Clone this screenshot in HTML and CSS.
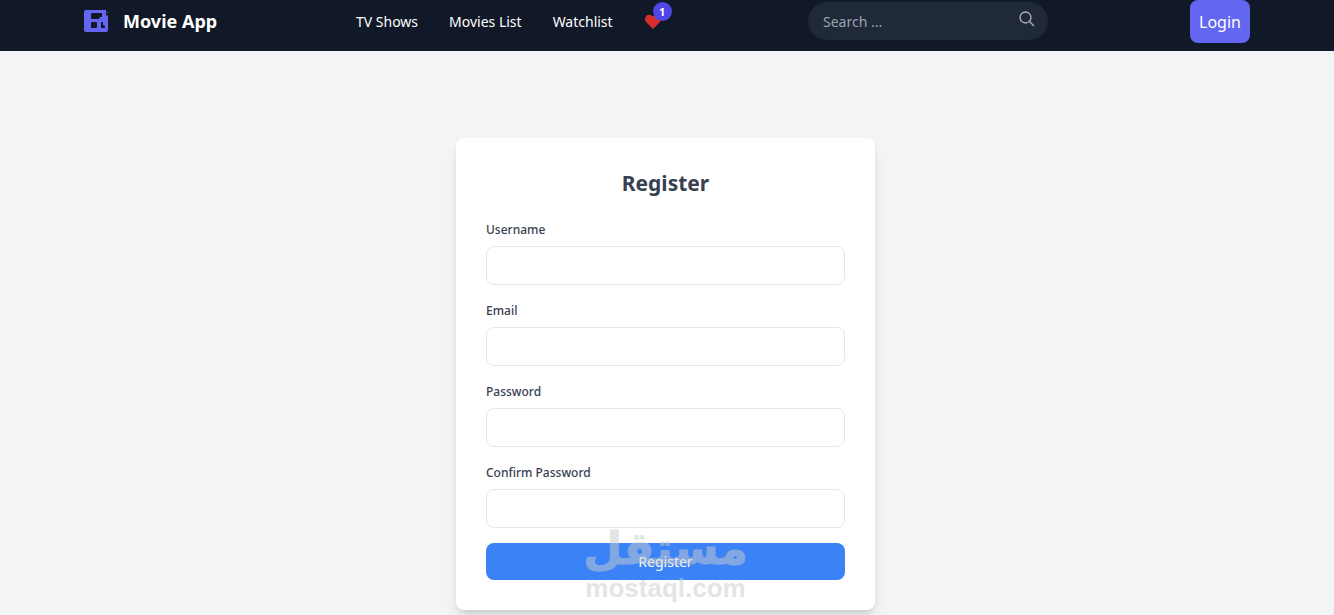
FILE: index.html
```html
<!DOCTYPE html>
<html lang="en">
<head>
<meta charset="utf-8">
<title>Movie App</title>
<link rel="stylesheet" href="styles.css">
</head>
<body>
<header class="navbar">
  <div class="navbar-inner">
    <a class="brand" href="#">
      <svg class="brand-icon" viewBox="0 0 24 22" aria-hidden="true">
        <path fill="#6366f1" fill-rule="evenodd" d="M2 0H22V3L24 2V20Q24 22 22 22H2Q0 22 0 20V2Q0 0 2 0ZM8 3Q7 3 7 4V8Q7 9 8 9H15L16 7H18V3ZM8 12Q7 12 7 13V17Q7 18 8 18H12Q13 18 13 17V13Q13 12 12 12ZM17 12V17Q17 18 18 18H21V16L19 15V12ZM22 3V6L24 5V3Z"/>
      </svg>
      <span>Movie App</span>
    </a>
    <nav class="links">
      <a href="#">TV Shows</a>
      <a href="#">Movies List</a>
      <a href="#">Watchlist</a>
      <a class="favorites" href="#" aria-label="Favorites">
        <svg class="heart" viewBox="0 0 16 15" aria-hidden="true"><path fill="#d32f2f" d="M8 15L1 8C-.6 6 0 3.600 1 2.200C3 0 6 .3 8 2.500C10 .3 13 0 15 2.200C16 3.600 16.600 6 15 8Z"/></svg>
        <span class="badge">1</span>
      </a>
    </nav>
    <form class="search">
      <input class="search-input" type="search" placeholder="Search ..." aria-label="Search">
      <button class="search-button" type="button" aria-label="Search">
        <svg viewBox="0 0 16 16" aria-hidden="true"><circle cx="6.500" cy="6.500" r="5.500"/><path d="M10.500 10.500L15 15"/></svg>
      </button>
    </form>
    <button class="login" type="button">Login</button>
  </div>
</header>
<main class="page">
  <form class="card">
    <h1 class="title">Register</h1>
    <div class="fields">
      <div class="field"><label for="username">Username</label><input id="username" type="text"></div>
      <div class="field"><label for="email">Email</label><input id="email" type="email"></div>
      <div class="field"><label for="password">Password</label><input id="password" type="password"></div>
      <div class="field"><label for="confirm">Confirm Password</label><input id="confirm" type="password"></div>
    </div>
    <button class="submit" type="button">Register</button>
    <div class="watermark">
      <span class="watermark-arabic" lang="ar" dir="rtl">مستقل</span>
      <span class="watermark-latin">mostaql.com</span>
    </div>
  </form>
</main>
</body>
</html>
```
FILE: styles.css
```css
* { box-sizing: border-box; }
body {
  margin: 0;
  min-height: 100vh;
  overflow: hidden;
  background: #f3f4f6;
  font-family: "Noto Sans", "Open Sans", sans-serif;
  font-size: 14px;
}
a { color: inherit; text-decoration: none; }
button, input { font: inherit; }
.navbar { background: #111827; color: #fff; }
.navbar-inner {
  display: grid;
  grid-template-columns: 272px 452px 240px 1fr;
  align-items: start;
  height: 51px;
  padding: 0 84px;
}
.brand {
  display: flex;
  align-items: center;
  gap: 15px;
  height: 42px;
  font-size: 18px;
  font-weight: 700;
}
.brand-icon { width: 24px; height: 22px; }
.links { display: flex; align-items: center; gap: 31px; height: 42px; }
.favorites { position: relative; display: flex; }
.heart { width: 18px; height: 15px; }
.badge {
  position: absolute;
  left: 9px;
  top: -12px;
  width: 19px;
  height: 19px;
  border-radius: 50%;
  background: #4f46e5;
  font-size: 11px;
  font-weight: 700;
  line-height: 19px;
  text-align: center;
}
.search {
  display: flex;
  align-items: center;
  height: 38px;
  margin-top: 2px;
  padding: 0 13px 0 15px;
  border-radius: 19px;
  background: #1f2937;
}
.search-input {
  flex: 1;
  min-width: 0;
  padding: 0;
  border: 0;
  outline: 0;
  background: none;
  color: #fff;
}
.search-input::placeholder { color: #9ca3af; }
.search-button { display: flex; padding: 0 0 4px; border: 0; background: none; }
.search-button svg {
  width: 16px;
  height: 16px;
  fill: none;
  stroke: #b4b4ba;
  stroke-width: 1.3;
}
.login {
  justify-self: end;
  width: 60px;
  height: 43px;
  padding: 0;
  border: 0;
  border-radius: 8px;
  background: #6366f1;
  color: #fff;
  font-size: 16px;
}
.page { display: flex; justify-content: center; padding: 87px 3px 0 0; }
.card {
  position: relative;
  width: 419px;
  padding: 30px;
  border-radius: 8px;
  background: #fff;
  box-shadow: 0 10px 15px -3px rgba(0, 0, 0, .1), 0 4px 6px -2px rgba(0, 0, 0, .1);
  color: #374151;
}
.title {
  margin: 0 0 22px;
  font-size: 21px;
  line-height: 30px;
  text-align: center;
}
.fields { display: flex; flex-direction: column; gap: 16px; margin-bottom: 15px; }
.field { display: flex; flex-direction: column; gap: 6px; }
.field label { font-size: 12px; font-weight: 500; line-height: 20px; }
.field input {
  height: 39px;
  padding: 0 12px;
  border: 1px solid #e5e7eb;
  border-radius: 8px;
  background: #fff;
}
.submit {
  display: block;
  width: 100%;
  height: 37px;
  padding: 0;
  border: 0;
  border-radius: 8px;
  background: #3b82f6;
  color: #fff;
}
.watermark {
  position: absolute;
  right: 0;
  bottom: 7px;
  left: 0;
  display: flex;
  flex-direction: column;
  align-items: center;
  color: #c8cdcd;
  opacity: .5;
  pointer-events: none;
}
.watermark-arabic {
  font-family: "DejaVu Sans", sans-serif;
  font-size: 45px;
  font-weight: 700;
  line-height: 48px;
  -webkit-text-stroke: 1px #c8cdcd;
}
.watermark-latin {
  font-family: "Liberation Sans", Arial, sans-serif;
  font-size: 26px;
  font-weight: 700;
  line-height: 30px;
}
```
